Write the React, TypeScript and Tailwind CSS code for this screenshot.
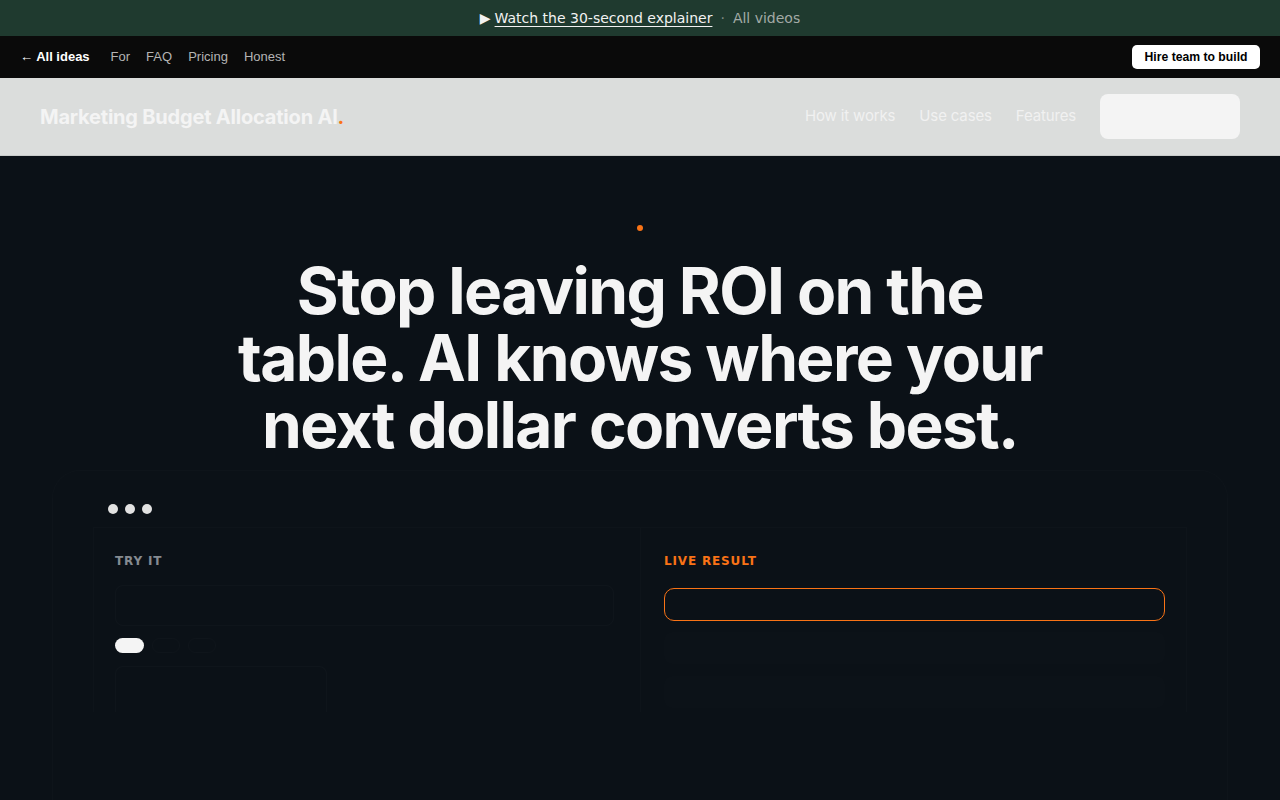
import React from 'react'

const sans = { fontFamily: 'Inter, "Noto Sans", sans-serif' }

function TopBanner() {
  return (
    <div className="h-9 bg-[#1f3a2f] flex items-center justify-center text-[14px] font-['DejaVu_Sans',sans-serif]">
      <span className="text-[#f2f2f2] mr-[4px]">▶</span>
      <a className="text-[#f2f2f2] underline underline-offset-[3px]" href="#">Watch the 30-second explainer</a>
      <span className="text-[#7f8c85] mx-[8px]">·</span>
      <span className="text-[#a3aaa6]">All videos</span>
    </div>
  )
}

function IdeasNav() {
  return (
    <div className="h-[42px] bg-[#0a0a0a] flex items-center justify-between px-5 text-[13px] font-['Liberation_Sans',Arial,sans-serif]">
      <div className="flex items-center gap-[16px]">
        <span className="text-white font-bold mr-[5px]">← All ideas</span>
        <span className="text-[#b4b4b4]">For</span>
        <span className="text-[#b4b4b4]">FAQ</span>
        <span className="text-[#b4b4b4]">Pricing</span>
        <span className="text-[#b4b4b4]">Honest</span>
      </div>
      <button className="bg-white text-black font-bold rounded-[5px] h-6 w-[128px] text-[12.2px]">Hire team to build</button>
    </div>
  )
}

function SiteHeader() {
  return (
    <header className="h-[78px] bg-[#dbdddc] border-b border-[#c8cbca] flex items-center justify-between px-10" style={sans}>
      <div className="text-[20px] font-bold tracking-[-0.01em] text-[#f4f4f4]">
        Marketing Budget Allocation AI<span className="text-[#f97316]">.</span>
      </div>
      <nav className="flex items-center gap-6 text-[15px] tracking-[-0.01em] text-[#f1f1f1]">
        <span>How it works</span>
        <span>Use cases</span>
        <span>Features</span>
        <div className="w-[140px] h-[45px] rounded-lg bg-[#f4f4f4]" />
      </nav>
    </header>
  )
}

function Demo() {
  return (
    <div className="mx-[52px] mt-[12px] rounded-[28px] border border-white/[0.015] bg-[#0b1117] pb-[120px]">
      <div className="flex gap-[7px] pl-[55px] pt-[33px] pb-[13px]">
        <span className="w-[10px] h-[10px] rounded-full bg-[#e2e2e2]" />
        <span className="w-[10px] h-[10px] rounded-full bg-[#e2e2e2]" />
        <span className="w-[10px] h-[10px] rounded-full bg-[#e2e2e2]" />
      </div>
      <div className="mx-10 border-t border-x border-white/[0.015] grid grid-cols-2">
        <div className="pl-[21px] pr-6 pt-[24px]">
          <div className="text-[12px] font-bold tracking-[0.07em] text-[#858b91] font-['DejaVu_Sans',sans-serif]">TRY IT</div>
          <div className="mt-[15px] h-[41px] w-[499px] rounded-lg border border-white/[0.018]" />
          <div className="mt-[12px] flex gap-[8px]">
            <span className="w-[29px] h-[15px] rounded-full bg-[#f4f4f4]" />
            <span className="w-[28px] h-[15px] rounded-full border border-white/[0.02]" />
            <span className="w-[28px] h-[15px] rounded-full border border-white/[0.02]" />
          </div>
          <div className="mt-[13px] h-[46px] w-[212px] rounded-t-lg border-x border-t border-white/[0.018]" />
        </div>
        <div className="pl-[23px] pr-6 pt-[24px] border-l border-white/[0.015]">
          <div className="text-[12px] font-bold tracking-[0.07em] text-[#f97316] font-['DejaVu_Sans',sans-serif]">LIVE RESULT</div>
          <div className="mt-[18px] h-[33px] w-[501px] rounded-[10px] border border-[#f97316]" />
          <div className="mt-[11px] h-[32px] w-[501px] rounded-lg bg-white/[0.006]" />
          <div className="mt-[12px] h-[32px] w-[501px] rounded-lg bg-white/[0.006]" />
        </div>
      </div>
    </div>
  )
}

export default function App() {
  return (
    <div className="h-screen bg-[#0b1117] overflow-hidden">
      <TopBanner />
      <IdeasNav />
      <SiteHeader />
      <main style={sans}>
        <div className="flex justify-center pt-[69px]">
          <span className="w-[6px] h-[6px] rounded-full bg-[#f97316]" />
        </div>
        <h1 className="mt-[26px] text-center text-[64px] leading-[67px] font-bold tracking-[-0.025em] text-[#f4f4f4]">
          Stop leaving ROI on the
          <br />
          table. AI knows where your
          <br />
          next dollar converts best.
        </h1>
        <Demo />
      </main>
    </div>
  )
}
